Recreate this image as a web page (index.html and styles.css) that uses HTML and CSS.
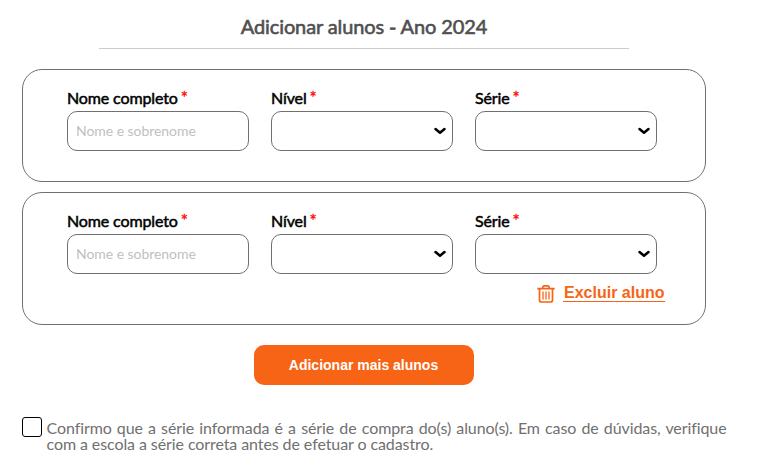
FILE: index.html
```html
<!DOCTYPE html>
<html lang="pt-BR">
<head>
<meta charset="utf-8">
<title>Adicionar alunos</title>
<link rel="stylesheet" href="styles.css">
</head>
<body>
<main class="page">
  <h1 class="title">Adicionar alunos - Ano 2024</h1>
  <section class="card">
    <div class="fields">
      <div class="field"><label>Nome completo <b>*</b></label><input class="control" type="text" placeholder="Nome e sobrenome"></div>
      <div class="field"><label>Nível <b>*</b></label><div class="control select"><svg class="chevron" viewBox="0 0 12 8"><path d="M1.500 2 6 5.800l4.500-3.800"/></svg></div></div>
      <div class="field"><label>Série <b>*</b></label><div class="control select"><svg class="chevron" viewBox="0 0 12 8"><path d="M1.500 2 6 5.800l4.500-3.800"/></svg></div></div>
    </div>
  </section>
  <section class="card card-removable">
    <div class="fields">
      <div class="field"><label>Nome completo <b>*</b></label><input class="control" type="text" placeholder="Nome e sobrenome"></div>
      <div class="field"><label>Nível <b>*</b></label><div class="control select"><svg class="chevron" viewBox="0 0 12 8"><path d="M1.500 2 6 5.800l4.500-3.800"/></svg></div></div>
      <div class="field"><label>Série <b>*</b></label><div class="control select"><svg class="chevron" viewBox="0 0 12 8"><path d="M1.500 2 6 5.800l4.500-3.800"/></svg></div></div>
    </div>
    <div class="remove">
      <svg class="trash" viewBox="0 0 18 18"><path d="M.3 3.600h17.400M5.800 3.600V2.500Q5.800 .9 7.400 .9h3.200q1.600 0 1.600 1.600v1.100M2.500 3.600v11.400q0 2 2 2h9q2 0 2-2V3.600"/><path d="M6 6.500v8M9 6.500v8M12 6.500v8" stroke-width="1.300"/></svg>
      <a class="remove-link">Excluir aluno</a>
    </div>
  </section>
  <button class="add">Adicionar mais alunos</button>
  <div class="confirm">
    <span class="box"></span>
    <p>Confirmo que a série informada é a série de compra do(s) aluno(s). Em caso de dúvidas, verifique com a escola a série correta antes de efetuar o cadastro.</p>
  </div>
</main>
</body>
</html>
```
FILE: styles.css
```css
* { box-sizing: border-box; }
body { margin: 0; background: #fff; font-family: Lato, sans-serif; }
.page { padding-left: 22px; }
.title { width: 530px; height: 49px; margin: 0 0 20px 77px; padding-top: 14px; border-bottom: 1px solid #ccc; font-size: 20px; line-height: 24px; font-weight: 400; letter-spacing: -.12px; -webkit-text-stroke: .6px #505050; color: #505050; text-align: center; }
.card { width: 684px; height: 113px; margin-bottom: 10px; padding: 18px 44px 0; border: 1px solid #707070; border-radius: 20px; }
.card-removable { height: 133px; }
.fields { display: flex; gap: 22px; }
.field { width: 182px; }
.field label { display: block; height: 23px; font-size: 16px; line-height: 20px; letter-spacing: -.13px; -webkit-text-stroke: .5px #000; color: #000; }
.field b { margin-left: -1px; font-size: 17px; line-height: 1; font-weight: 400; color: red; -webkit-text-stroke: .3px red; }
.control { display: block; width: 182px; height: 40px; border: 1px solid #707070; border-radius: 10px; background: #fff; padding: 0 8px 2px; font-family: Lato, sans-serif; font-size: 14px; letter-spacing: -.05px; }
.control::placeholder { color: #bfbfbf; }
.select { display: flex; align-items: center; justify-content: flex-end; padding: 0 6.500px 0 0; }
.chevron { width: 12px; height: 8px; fill: none; stroke: #000; stroke-width: 2.500; stroke-linecap: round; stroke-linejoin: round; }
.remove { display: flex; justify-content: flex-end; gap: 8px; margin: 10px -4px 0 0; }
.trash { width: 18px; height: 18px; margin-top: 1px; fill: none; stroke: #f76416; stroke-width: 1.700; }
.remove-link { font: bold 16px/18px "Liberation Sans", sans-serif; width: 102px; height: 18px; padding-left: 1px; white-space: nowrap; color: #f76416; border-bottom: 1px solid #f76416; }
.add { display: block; width: 220px; height: 40px; margin: 20px 0 0 232px; padding: 0 1px 0 0; border: 0; border-radius: 10px; background: #f76416; color: #fff; font: bold 14px "Liberation Sans", sans-serif; }
.confirm { display: flex; gap: 4.500px; margin-top: 32px; }
.box { width: 20px; height: 20px; border: 1px solid #000; border-radius: 3px; flex: none; }
.confirm p { width: 680px; margin: 3px 0 0; font-size: 16px; line-height: 16px; letter-spacing: -.09px; font-variant-ligatures: common-ligatures; color: #707070; text-align: justify; }
```
